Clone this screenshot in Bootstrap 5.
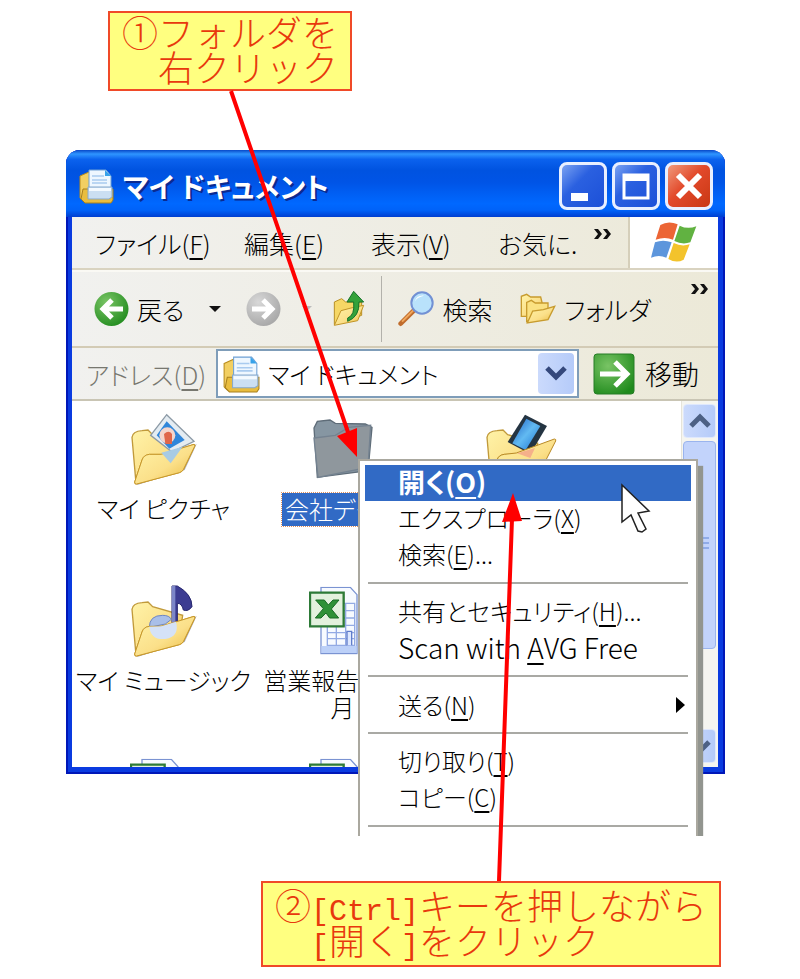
<!DOCTYPE html>
<html lang="ja">
<head>
<meta charset="utf-8">
<meta name="viewport" content="width=device-width, initial-scale=1">
<title>マイ ドキュメント</title>
<link rel="stylesheet" href="https://cdn.jsdelivr.net/npm/bootstrap@5.3.0/dist/css/bootstrap.min.css">
<style>
body{background:#fff;color:#000;font-family:"Noto Sans CJK JP","Liberation Sans",sans-serif;font-size:25px;line-height:32px;font-weight:300;font-feature-settings:"palt"}
svg{display:block;flex:none}
button{font:inherit;font-feature-settings:inherit;color:inherit}
.stage{padding:11px 75px 11px 66px}
.callout{background:#ffff80;border:2px solid #f04a28;color:#e8380d;font-size:36px;line-height:35px;font-feature-settings:normal;width:fit-content;white-space:pre;padding:1px 12px 5px}
.callout .latin{font-family:"Liberation Mono",monospace;font-size:30px;line-height:1px}
.callout-one{margin-left:42px}
.callout-two{margin:107px 0 0 195px;padding:4px 12px 8px}
.xp-window{margin-top:59px;background:#0a3be0;border-radius:14px 14px 0 0;padding:0 7px 7px 6px;box-shadow:inset 2px 0 #0017b8,inset -2px -2px #0017b8}
.titlebar{height:67px;margin:0 -7px 0 -6px;padding:5px 12px 0 11px;gap:5px;border-radius:14px 14px 0 0;background:linear-gradient(#0848c8 0,#2f95ff 6%,#0b62ee 14%,#0053e0 30%,#0054e6 48%,#0068ff 80%,#0062f8 90%,#003ed0 100%)}
.titlebar h1{font-size:28px;line-height:32px;font-weight:700;color:#fff;text-shadow:2px 2px #0a2a90;margin:0 auto 0 3px}
.cap-btn{width:48px;height:48px;padding:0;border:3px solid #e8efff;border-radius:8px;background:linear-gradient(135deg,#7aa2f2,#2a60e0 40%,#1c50d8)}
.cap-close{background:linear-gradient(135deg,#f09a7c,#e2492a 45%,#c93814)}
.menubar{height:53px;background:linear-gradient(90deg,#f1f1ef,#ece9d8);border-bottom:2px solid #d9d3c0}
.menu-grid{display:grid;grid-template-columns:149px 127px 127px 95px 1fr;padding-left:23px}
.bar-btn{background:none;border:0;padding:0;text-align:left;white-space:nowrap}
.chev{align-self:flex-start}
.brand{width:90px;border-left:2px solid #d5cfba}
.toolbar{height:78px;padding:0 8px 0 22px;background:linear-gradient(90deg,#f1f1ef,#ece9d8);border-top:2px solid #faf9f4;border-bottom:2px solid #d3cbb5}
.addressbar{height:53px;padding:0 19px 0 14px;background:linear-gradient(90deg,#f1f1ef,#ece9d8);border-bottom:2px solid #c9c5b4}
.addressbar label{width:130px;color:#77776f}
.combo{border:2px solid #7f9db9;height:49px;background:#fff;padding:0 3px 0 4px}
.combo select{appearance:none;border:0;background:none;padding:0 0 0 8px;min-width:0;color:inherit;font:inherit;font-size:24px;font-feature-settings:inherit}
.blue-btn{width:36px;height:41px;border:0;border-radius:4px;padding:0;background:linear-gradient(90deg,#cbdafc,#b5cbf9)}
.go-btn{gap:10px;margin-left:14px;font-size:27px}
.pane{height:366px;background:#fff;overflow:hidden}
.files{display:grid;grid-template-columns:repeat(3,179px);grid-auto-rows:172px;padding:11px 0 0 2px;text-align:center;font-size:24px;line-height:27px}
.files svg{margin:0 auto}
.file-label{padding:8px 0 0;white-space:nowrap;display:inline-block}
.picked{margin-top:7px;padding:0 3px 1px;line-height:32px;background:#316ac5;color:#fff;outline:1px dotted #e0905c}
.scroller{width:37px;background:#f5f5f0;border-left:1px solid #e6e4da;padding:3px 2px 4px 1px}
.scroller .blue-btn{width:33px;height:34px;border:1px solid #dfe8fd}
.thumb{height:208px;margin:3px 0 auto;border:1px solid #9ab4ee;border-radius:4px;background:#c2d3fb;width:33px}
.ctx{position:absolute;left:358px;top:459px;width:340px;background:#fff;border:2px solid #aaa89f;border-bottom:0;padding:4px 5px 9px;font-size:24px;line-height:34px;box-shadow:6px 6px 1px -1px #92958f;clip-path:inset(0 -8px 0 0)}
.ctx button{display:flex;width:100%;height:36px;padding:0 6px 0 33px;border:0;background:none;text-align:left;white-space:nowrap}
.ctx button.active{background:#316ac5;color:#fff;font-weight:700;font-size:27px}
.ctx hr{margin:9px 3px 10px;border:0;border-top:2px solid #a9a9a4;opacity:1}
.ctx button.latin-item{font-size:28px}
.overlay{position:absolute;left:0;top:0;pointer-events:none}
u{text-underline-offset:4px;text-decoration-thickness:2px}
</style>
<script src="https://cdn.jsdelivr.net/npm/bootstrap@5.3.0/dist/js/bootstrap.bundle.min.js"></script>
</head>
<body>
<svg width="0" height="0" class="position-absolute" aria-hidden="true">
<defs>
<linearGradient id="gold" x1="0" y1="0" x2="1" y2="1"><stop offset="0" stop-color="#fff3a8"/><stop offset=".55" stop-color="#fbe08a"/><stop offset="1" stop-color="#eab93c"/></linearGradient>
<linearGradient id="sky" x1="0" y1="0" x2="1" y2="1"><stop offset="0" stop-color="#1a5cc0"/><stop offset=".5" stop-color="#62baf2"/><stop offset="1" stop-color="#1870d0"/></linearGradient>
<radialGradient id="green" cx=".35" cy=".3" r=".8"><stop offset="0" stop-color="#79c465"/><stop offset="1" stop-color="#1f8a1c"/></radialGradient>
<radialGradient id="grey" cx=".35" cy=".3" r=".8"><stop offset="0" stop-color="#d8d8d8"/><stop offset="1" stop-color="#a4a4a4"/></radialGradient>
<symbol id="docs" viewBox="0 0 36 36">
<path d="M2 8l9-4 2 3v24l-8 2-3-3z" fill="#f2cf62" stroke="#b98c1c"/>
<path d="M5 21h30v11l-2 3H7l-4-4z" fill="#e9bd3e" stroke="#a9801d"/>
<path d="M11 2h17l5 6v16H11z" fill="#eef7ff" stroke="#6ea0d4"/><path d="M27 2v6h6z" fill="#36a2ea"/>
<path d="M14 8h12M14 12h15M14 15h15" stroke="#a9cbef" stroke-width="1.5"/>
<path d="M10 19h24v10l-3 2H10z" fill="#cbdff2" stroke="#87a9cc"/><path d="M11 20h22v3H11z" fill="#f4faff"/>
</symbol>
<symbol id="openfolder" viewBox="0 0 200 220">
<path d="M16 210L4 72q2-18 30-20l18-2 14 14 90 26-12 84z" fill="url(#gold)" stroke="#c19a3b" stroke-width="4"/>
<path d="M198 92l-36 78-140 44q-8 0-6-10z" fill="#667" opacity=".55"/>
<path d="M12 206l22-66q5-15 22-17l36 0 98-30q4 0 2 6l-34 70q-3 6-12 9L18 212q-7 1-6-6z" fill="url(#gold)" stroke="#c7982c" stroke-width="3"/>
</symbol>
<symbol id="excel" viewBox="0 0 150 204">
<path d="M36 2h88l20 22v177H36z" fill="#f7faff" stroke="#7a93d2" stroke-width="4"/><path d="M37 178h106v21H37z" fill="#bcd0f8"/>
<path d="M55 50h82v126H55zM55 72h82M55 94h82M55 116h82M55 138h82M55 156h82M82 50v126M110 50v126" fill="none" stroke="#93aae4" stroke-width="4"/>
<path d="M114 176v-42h14v42" fill="#dce7ff" stroke="#5f7ccb" stroke-width="4"/>
<path d="M3 18h101v101H3z" fill="#e3f1de" stroke="#2d7a37" stroke-width="7"/>
<path d="M20 40h26l12 15 14-15h18L67 67l22 27H62L51 79 36 94H19l24-28z" fill="#2f9138" stroke="#186b25" stroke-width="3"/>
</symbol>
</defs>
</svg>

<main class="stage position-relative">
<div class="callout callout-one">①フォルダを
　右クリック</div>

<section class="xp-window">
<header class="titlebar d-flex align-items-center">
<svg width="38" height="36"><use href="#docs"/></svg>
<h1>マイ ドキュメント</h1>
<button class="cap-btn" aria-label="最小化"><svg width="42" height="42"><path d="M9 28h17v8H9z" fill="#fff"/></svg></button>
<button class="cap-btn" aria-label="最大化"><svg width="42" height="42"><path d="M9 10h24v23H9z" fill="none" stroke="#fff" stroke-width="3"/><path d="M8 9h26v7H8z" fill="#fff"/></svg></button>
<button class="cap-btn cap-close" aria-label="閉じる"><svg width="42" height="42"><path d="M10 10l22 22M32 10L10 32" stroke="#fff" stroke-width="6"/></svg></button>
</header>

<nav class="menubar d-flex">
<div class="menu-grid flex-grow-1 align-items-center">
<button class="bar-btn">ファイル(<u>F</u>)</button><button class="bar-btn">編集(<u>E</u>)</button><button class="bar-btn">表示(<u>V</u>)</button><button class="bar-btn">お気に.</button>
<button class="bar-btn chev pt-2" aria-label="その他のメニュー"><svg width="20" height="22"><path d="M1 4h4l4 5-4 5H1l4-5zM10 4h4l4 5-4 5h-4l4-5z" fill="#111"/></svg></button>
</div>
<div class="brand d-flex align-items-center justify-content-center bg-white">
<svg width="46" height="44" viewBox="0 0 138 132"><path d="M28 12q24-14 52-2L66 56q-24-10-52 0z" fill="#ec6535"/><path d="M86 14q24 12 50 2l-18 48q-24 8-48-4z" fill="#61b241"/><path d="M12 64q24-10 50 0l-16 46q-22-10-46 0z" fill="#5d96dc"/><path d="M68 66q24 12 48 4l-18 46q-22 12-46-2z" fill="#f3c32c"/></svg>
</div>
</nav>

<div class="toolbar d-flex align-items-center">
<button class="bar-btn d-flex align-items-center gap-2"><svg width="35" height="36" viewBox="0 0 35 36"><circle cx="17.500" cy="18" r="17" fill="url(#green)"/><path d="M29 18H10M18 9l-9 9 9 9" fill="none" stroke="#fff" stroke-width="5"/></svg>戻る</button>
<button class="bar-btn ms-4" aria-label="戻る履歴"><svg width="14" height="8"><path d="M1 1h12L7 7z" fill="#111"/></svg></button>
<button class="bar-btn ms-4" aria-label="進む" disabled><svg width="35" height="36" viewBox="0 0 35 36"><circle cx="17.500" cy="18" r="17" fill="url(#grey)"/><path d="M6 18h19M17 9l9 9-9 9" fill="none" stroke="#fff" stroke-width="5"/></svg></button>
<button class="bar-btn ms-3 ps-1" aria-label="進む履歴" disabled><svg width="12" height="8"><path d="M1 1h10L6 6z" fill="#bbb"/></svg></button>
<button class="bar-btn ms-3 ps-1" aria-label="上へ"><svg width="32" height="38" viewBox="0 0 96 114"><path d="M4 104V36l22-10 12 10h48v40z" fill="#f6d765" stroke="#b98f25" stroke-width="3"/><path d="M4 106l20-44 30-8 38-8-18 46z" fill="url(#gold)" stroke="#c19528" stroke-width="3"/><path d="M44 84q22-8 18-48H42L62 4l30 32H78q2 44-34 58z" fill="#34a23a" stroke="#16732a" stroke-width="3"/></svg></button>
<div class="vr ms-3 me-3 my-1 align-self-stretch"></div>
<button class="bar-btn d-flex align-items-center gap-2"><svg width="36" height="36" viewBox="0 0 108 108"><path d="M8 98l38-38" stroke="#c06c2c" stroke-width="14" stroke-linecap="round"/><path d="M12 92l34-34" stroke="#f0a85e" stroke-width="6"/><circle cx="72" cy="36" r="32" fill="#b9e2fb" stroke="#7291d4" stroke-width="6"/><path d="M50 32q6-20 28-18-22 4-28 18z" fill="#fff"/></svg>検索</button>
<button class="bar-btn d-flex align-items-center gap-2 ms-4 ps-1"><svg width="36" height="32" viewBox="0 0 108 96"><path d="M4 70V10l16-6 12 8h30l4 16v42z" fill="url(#gold)" stroke="#c79b2e" stroke-width="4"/><path d="M20 86V28l14-6 12 8h38v24z" fill="#fae182" stroke="#c79b2e" stroke-width="4"/><path d="M22 90l16-36 32-4 34-10-20 40z" fill="url(#gold)" stroke="#c79b2e" stroke-width="4"/></svg>フォルダ</button>
<button class="bar-btn chev ms-auto pt-2" aria-label="その他のボタン"><svg width="20" height="22"><path d="M1 4h4l4 5-4 5H1l4-5zM10 4h4l4 5-4 5h-4l4-5z" fill="#111"/></svg></button>
</div>

<div class="addressbar d-flex align-items-center">
<label for="addr">アドレス(<u>D</u>)</label>
<div class="combo d-flex align-items-center flex-grow-1">
<svg width="38" height="38"><use href="#docs"/></svg>
<select id="addr" class="flex-grow-1"><option>マイ ドキュメント</option></select>
<button class="blue-btn" aria-label="一覧を開く"><svg width="36" height="41"><path d="M9 15l9 9 9-9" fill="none" stroke="#34487c" stroke-width="5"/></svg></button>
</div>
<button class="bar-btn go-btn d-flex align-items-center"><svg width="42" height="42"><rect x="1" y="1" width="40" height="40" rx="3" fill="url(#green)" stroke="#267d26"/><path d="M7 21h26M22 9l12 12-12 12" fill="none" stroke="#fff" stroke-width="5"/></svg>移動</button>
</div>

<div class="pane d-flex">
<div class="files flex-grow-1">
<div><svg width="68" height="74" viewBox="-2 -4 204 222"><use href="#openfolder" width="200" height="220"/><path d="M108 4l82 80-66 32-64-50z" fill="#e4ecf2" stroke="#8c9aa6" stroke-width="4"/><path d="M108 24l54 56-46 26-38-40z" fill="#2f86da"/><circle cx="110" cy="66" r="24" fill="#f4d5cc"/><path d="M100 62q14-14 24 0v30h-20z" fill="#df664a"/><path d="M12 206l22-66q5-15 22-17l36 0 98-30q4 0 2 6l-34 70q-3 6-12 9L18 212q-7 1-6-6z" fill="url(#gold)" stroke="#c7982c" stroke-width="3"/><path d="M92 118l64-18-36 50z" fill="#a8cbe4"/></svg><span class="file-label">マイ ピクチャ</span></div>
<div><svg width="62" height="74" viewBox="0 0 186 222"><path d="M6 48l10-20 38-4 16 10 90 2 20 10-12 130L16 196z" fill="#8696a2" stroke="#5e6c78" stroke-width="4"/><path d="M6 78l64-8 40-24 66-6-8 126-150 30z" fill="#8f979d" stroke="#748290" stroke-width="4"/></svg><span class="file-label picked">会社データ</span></div>
<div><svg width="74" height="74" viewBox="-2 -4 222 222"><use href="#openfolder" width="200" height="220"/><path d="M118 4l66 34-50 84-68-36z" fill="#243442"/><path d="M122 16l42 22-44 72-40-20z" fill="url(#sky)"/><path d="M12 206l22-66q5-15 22-17l36-4 114-42q6 0 4 6l-46 90q-3 6-12 9L18 212q-7 1-6-6z" fill="url(#gold)" stroke="#b98925" stroke-width="3"/><path d="M94 120l54-16-14 30z" fill="#f5b08a"/></svg><span class="file-label">マイ ビデオ</span></div>
<div><svg width="68" height="74" viewBox="-2 -4 204 222"><use href="#openfolder" width="200" height="220"/><path d="M124 2h16q44 24 44 62-12 16-26 10-4-20-18-20v58h-16z" fill="#3c3c92" stroke="#26266e" stroke-width="3"/><path d="M124 2v110h10V2z" fill="#7c86c8"/><path d="M56 126q0-36 40-36 20 0 26 12l-18 14z" fill="#a9bfe8" stroke="#6f86c0" stroke-width="3"/><path d="M12 206l22-66q5-15 22-17l36 0 98-30q4 0 2 6l-34 70q-3 6-12 9L18 212q-7 1-6-6z" fill="url(#gold)" stroke="#c7982c" stroke-width="3"/><path d="M56 124l36-1 44-14q12 44-32 52-44 4-48-37z" fill="#d5e2f7"/></svg><span class="file-label">マイ ミュージック</span></div>
<div><svg width="68" height="74" viewBox="0 -8 204 222"><use href="#excel" width="150" height="204"/></svg><span class="file-label">営業報告書123<br>月</span></div>
<div></div>
<div><svg width="68" height="74" viewBox="0 -8 204 222"><use href="#excel" width="150" height="204"/></svg></div>
<div><svg width="68" height="74" viewBox="0 -8 204 222"><use href="#excel" width="150" height="204"/></svg></div>
</div>
<div class="scroller d-flex flex-column">
<button class="blue-btn" aria-label="上へスクロール"><svg width="31" height="32"><path d="M7 21l9-9 9 9" fill="none" stroke="#4d6185" stroke-width="5"/></svg></button>
<div class="thumb d-flex align-items-center justify-content-center"><svg width="18" height="16"><path d="M0 1h18M0 6h18M0 11h18" stroke="#8fabe8" stroke-width="2"/></svg></div>
<button class="blue-btn" aria-label="下へスクロール"><svg width="31" height="32"><path d="M7 12l9 9 9-9" fill="none" stroke="#4d6185" stroke-width="5"/></svg></button>
</div>
</div>
</section>

<div class="ctx">
<button class="active">開く(<u>O</u>)</button>
<button>エクスプローラ(<u>X</u>)</button>
<button>検索(<u>E</u>)...</button>
<hr>
<button>共有とセキュリティ(<u>H</u>)...</button>
<button class="latin-item">Scan with&nbsp;<u>A</u>VG Free</button>
<hr>
<button class="align-items-center">送る(<u>N</u>)<svg class="ms-auto" width="9" height="16"><path d="M0 0l9 8-9 8z" fill="#000"/></svg></button>
<hr>
<button>切り取り(<u>T</u>)</button>
<button>コピー(<u>C</u>)</button>
<hr class="mb-0">
</div>

<div class="callout callout-two">②<span class="latin">[Ctrl]</span>キーを押しながら
　<span class="latin">[</span>開く<span class="latin">]</span>をクリック</div>

<svg class="overlay" width="800" height="979" aria-hidden="true">
<path d="M231 91L350 438M499 881l13-362" stroke="#f00" stroke-width="4"/>
<path d="M337 436l20-8v29zM502 522l11-29 9 28z" fill="#f00"/>
<path d="M622 485v37l9-7 7 16 4 1 4-3-8-16 11-2z" fill="#fff" stroke="#222" stroke-width="1.500"/>
</svg>
</main>
</body>
</html>
